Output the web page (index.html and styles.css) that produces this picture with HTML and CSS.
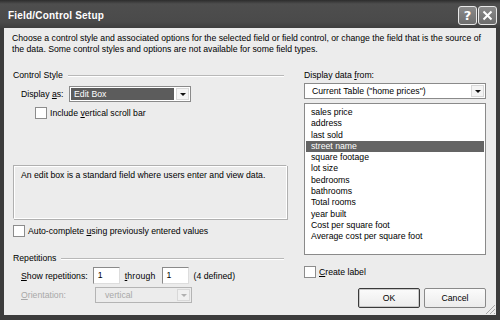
FILE: index.html
```html
<!DOCTYPE html>
<html lang="en">
<head>
    <meta charset="UTF-8">
    <title>Field/Control Setup</title>
    <link rel="stylesheet" href="styles.css">
</head>
<body>
    <div class="window">
        <div class="titlebar">
            <span class="title">Field/Control Setup</span>
            <div class="caption-buttons">
                <span class="cap-btn help">?</span>
                <span class="cap-btn close">
                    <svg width="13" height="13" viewBox="0 0 13 13"><path d="M2.5 2.5 L10.5 10.5 M10.5 2.5 L2.5 10.5" stroke="#fff" stroke-width="2" fill="none"/></svg>
                </span>
            </div>
        </div>

        <div class="content">
            <p class="intro">Choose a control style and associated options for the selected field or field control, or change the field that is the source of the data. Some control styles and options are not available for some field types.</p>

            <div class="panes">
                <div class="left">
                    <div class="group-title"><span>Control Style</span></div>
                    <div class="row display-row">
                        <span class="label">Display <u>a</u>s:</span>
                        <div class="combo style-combo">
                            <span class="combo-value selected">Edit Box</span>
                            <span class="drop"><i></i></span>
                        </div>
                    </div>
                    <label class="check scroll-check"><span class="box"></span><span>Include <u>v</u>ertical scroll bar</span></label>

                    <div class="description">An edit box is a standard field where users enter and view data.</div>

                    <label class="check auto-check"><span class="box"></span><span>Auto-complete <u>u</u>sing previously entered values</span></label>

                    <div class="group-title rep-title"><span>Repetitions</span></div>
                    <div class="row rep-row">
                        <span class="label"><u>S</u>how repetitions:</span>
                        <span class="num-input">1</span>
                        <span class="label through"><u>t</u>hrough</span>
                        <span class="num-input">1</span>
                        <span class="label">(4 defined)</span>
                    </div>
                    <div class="row orient-row disabled">
                        <span class="label"><u>O</u>rientation:</span>
                        <div class="combo orient-combo">
                            <span class="combo-value">vertical</span>
                            <span class="drop"><i></i></span>
                        </div>
                    </div>
                </div>

                <div class="right">
                    <div class="group-title plain"><span>Display data <u>f</u>rom:</span></div>
                    <div class="combo table-combo">
                        <span class="combo-value">Current Table ("home prices")</span>
                        <span class="drop"><i></i></span>
                    </div>
                    <ul class="field-list">
                        <li>sales price</li>
                        <li>address</li>
                        <li>last sold</li>
                        <li class="active">street name</li>
                        <li>square footage</li>
                        <li>lot size</li>
                        <li>bedrooms</li>
                        <li>bathrooms</li>
                        <li>Total rooms</li>
                        <li>year built</li>
                        <li>Cost per square foot</li>
                        <li>Average cost per square foot</li>
                    </ul>
                    <label class="check label-check"><span class="box"></span><span><u>C</u>reate label</span></label>
                    <div class="buttons">
                        <button class="btn default">OK</button>
                        <button class="btn">Cancel</button>
                    </div>
                </div>
            </div>
            <svg class="grip" width="12" height="12" viewBox="0 0 12 12">
                <path d="M11 2 L2 11 M11 6 L6 11 M11 10 L10 11" stroke="#a8a8a8" stroke-width="1" fill="none"/>
            </svg>
        </div>
    </div>
</body>
</html>
```

FILE: styles.css
```css
/* Dialog frame */
body {
    margin: 0;
    width: 500px;
    height: 320px;
    overflow: hidden;
    font-family: "Liberation Sans", Arial, sans-serif;
    font-size: 8.7px;
    color: #000;
}

.window {
    width: 500px;
    height: 320px;
    box-sizing: border-box;
    background: #3c3c3c;
    padding: 0 4px 5px 4px;
    display: flex;
    flex-direction: column;
}

.titlebar {
    height: 28px;
    display: flex;
    align-items: center;
    justify-content: space-between;
    background: linear-gradient(#2c2c2c, #4e4e4e 4px, #4a4a4a 22px, #3e3e3e);
    margin: 0 -4px;
    padding: 0 3px 0 8px;
    flex-shrink: 0;
}

.title {
    color: #fff;
    font-family: "Liberation Sans", Arial, sans-serif;
    font-weight: bold;
    font-size: 10px;
    letter-spacing: 0.2px;
    margin-top: 2px;
}

.caption-buttons {
    display: flex;
    gap: 1px;
    margin-top: 2px;
}

.cap-btn {
    width: 17px;
    height: 17px;
    border: 1px solid #e8e8e8;
    border-radius: 3px;
    background: linear-gradient(#8a8a8a, #6e6e6e);
    color: #fff;
    display: flex;
    align-items: center;
    justify-content: center;
    font-family: "DejaVu Sans", sans-serif;
    font-weight: bold;
    font-size: 13px;
}

.content {
    flex: 1;
    background: #ececec;
    padding: 0 10px 0 8px;
    position: relative;
}

.intro {
    margin: 5px 0 0 0;
    line-height: 11px;
}

.panes {
    display: flex;
    gap: 16px;
    margin-top: 14px;
}

.left {
    width: 275px;
    padding-left: 1px;
}

.right {
    width: 182px;
}

.group-title {
    height: 12px;
    line-height: 12px;
    display: flex;
    align-items: center;
    gap: 5px;
}

.group-title::after {
    content: "";
    flex: 1;
    border-top: 1px solid #b8b8b8;
    border-bottom: 1px solid #fff;
    margin-top: 1px;
    margin-right: 4px;
}

.group-title.plain::after {
    display: none;
}

.row {
    display: flex;
    align-items: center;
}

.display-row {
    margin-top: 5px;
    padding-left: 8px;
}

.display-row .label {
    width: 48px;
}

/* Combo boxes */
.combo {
    height: 16px;
    box-sizing: border-box;
    border: 1px solid #8a8a8a;
    background: #fff;
    display: flex;
    align-items: center;
    padding: 1px;
}

.combo-value {
    flex: 1;
    height: 12px;
    line-height: 12px;
    padding-left: 3px;
    white-space: nowrap;
    overflow: hidden;
}

.combo-value.selected {
    background: #5c5c5c;
    color: #fff;
    margin-right: 2px;
}

.drop {
    width: 13px;
    height: 12px;
    box-sizing: border-box;
    background: #f4f4f4;
    border: 1px solid #d8d8d8;
    display: flex;
    align-items: center;
    justify-content: center;
}

.drop i {
    width: 0;
    height: 0;
    border-left: 3px solid transparent;
    border-right: 3px solid transparent;
    border-top: 3px solid #111;
}

.style-combo {
    width: 122px;
}

.table-combo {
    margin-top: 2px;
}

.table-combo .combo-value {
    padding-left: 6px;
}

/* Check boxes */
.check {
    display: flex;
    align-items: center;
    height: 13px;
}

.box {
    width: 10px;
    height: 10px;
    border: 1px solid #8c8c8c;
    background: #fff;
    margin-right: 3px;
}

.scroll-check {
    margin-top: 4px;
    padding-left: 22px;
}

.description {
    margin-top: 46px;
    height: 54px;
    box-sizing: border-box;
    border: 1px solid #b0b0b0;
    border-right-color: #fff;
    border-bottom-color: #fff;
    box-shadow: inset 1px 1px 0 #fff, 1px 1px 0 #b0b0b0;
    padding: 4px 7px;
    width: 274px;
}

.auto-check {
    margin-top: 5px;
}

.rep-title {
    margin-top: 15px;
}

.rep-row {
    margin-top: 3px;
    padding-left: 8px;
    gap: 5px;
}

.through {
    margin-right: 1px;
    letter-spacing: 0.2px;
}

.num-input {
    width: 27px;
    height: 17px;
    box-sizing: border-box;
    border: 1px solid #8a8a8a;
    border-right-color: #ddd;
    border-bottom-color: #ddd;
    background: #fff;
    padding-left: 4px;
    line-height: 15px;
}

.orient-row {
    margin-top: 3px;
    padding-left: 8px;
}

.orient-row .label {
    width: 74px;
}

.disabled {
    color: #a8a8a8;
}

.orient-combo {
    width: 97px;
    background: #ececec;
    border-color: #b4b4b4;
}

.orient-combo .combo-value {
    padding-left: 8px;
}

.disabled .drop {
    background: #f0f0f0;
}

.disabled .drop i {
    border-top-color: #b0b0b0;
}

/* Field list */
.field-list {
    list-style: none;
    margin: 4px 0 0 0;
    padding: 3px 1px;
    height: 152px;
    box-sizing: border-box;
    border: 1px solid #8a8a8a;
    background: #fff;
}

.field-list li {
    height: 11.3px;
    line-height: 11.3px;
    padding-left: 5px;
}

.field-list li.active {
    background: #646464;
    color: #fff;
}

.label-check {
    margin-top: 10px;
}

.buttons {
    display: flex;
    justify-content: flex-end;
    gap: 4px;
    margin-top: 10px;
}

.btn {
    width: 62px;
    height: 20px;
    font-family: "Liberation Sans", Arial, sans-serif;
    font-size: 8.7px;
    color: #000;
    background: linear-gradient(#fbfbfb, #ececec);
    border: 1px solid #8a8a8a;
    border-radius: 2px;
    padding: 0;
}

.btn.default {
    border-color: #3a3a3a;
    box-shadow: inset 0 0 0 1px #c8c8c8;
}

.grip {
    position: absolute;
    right: 0;
    bottom: 0;
}
```
